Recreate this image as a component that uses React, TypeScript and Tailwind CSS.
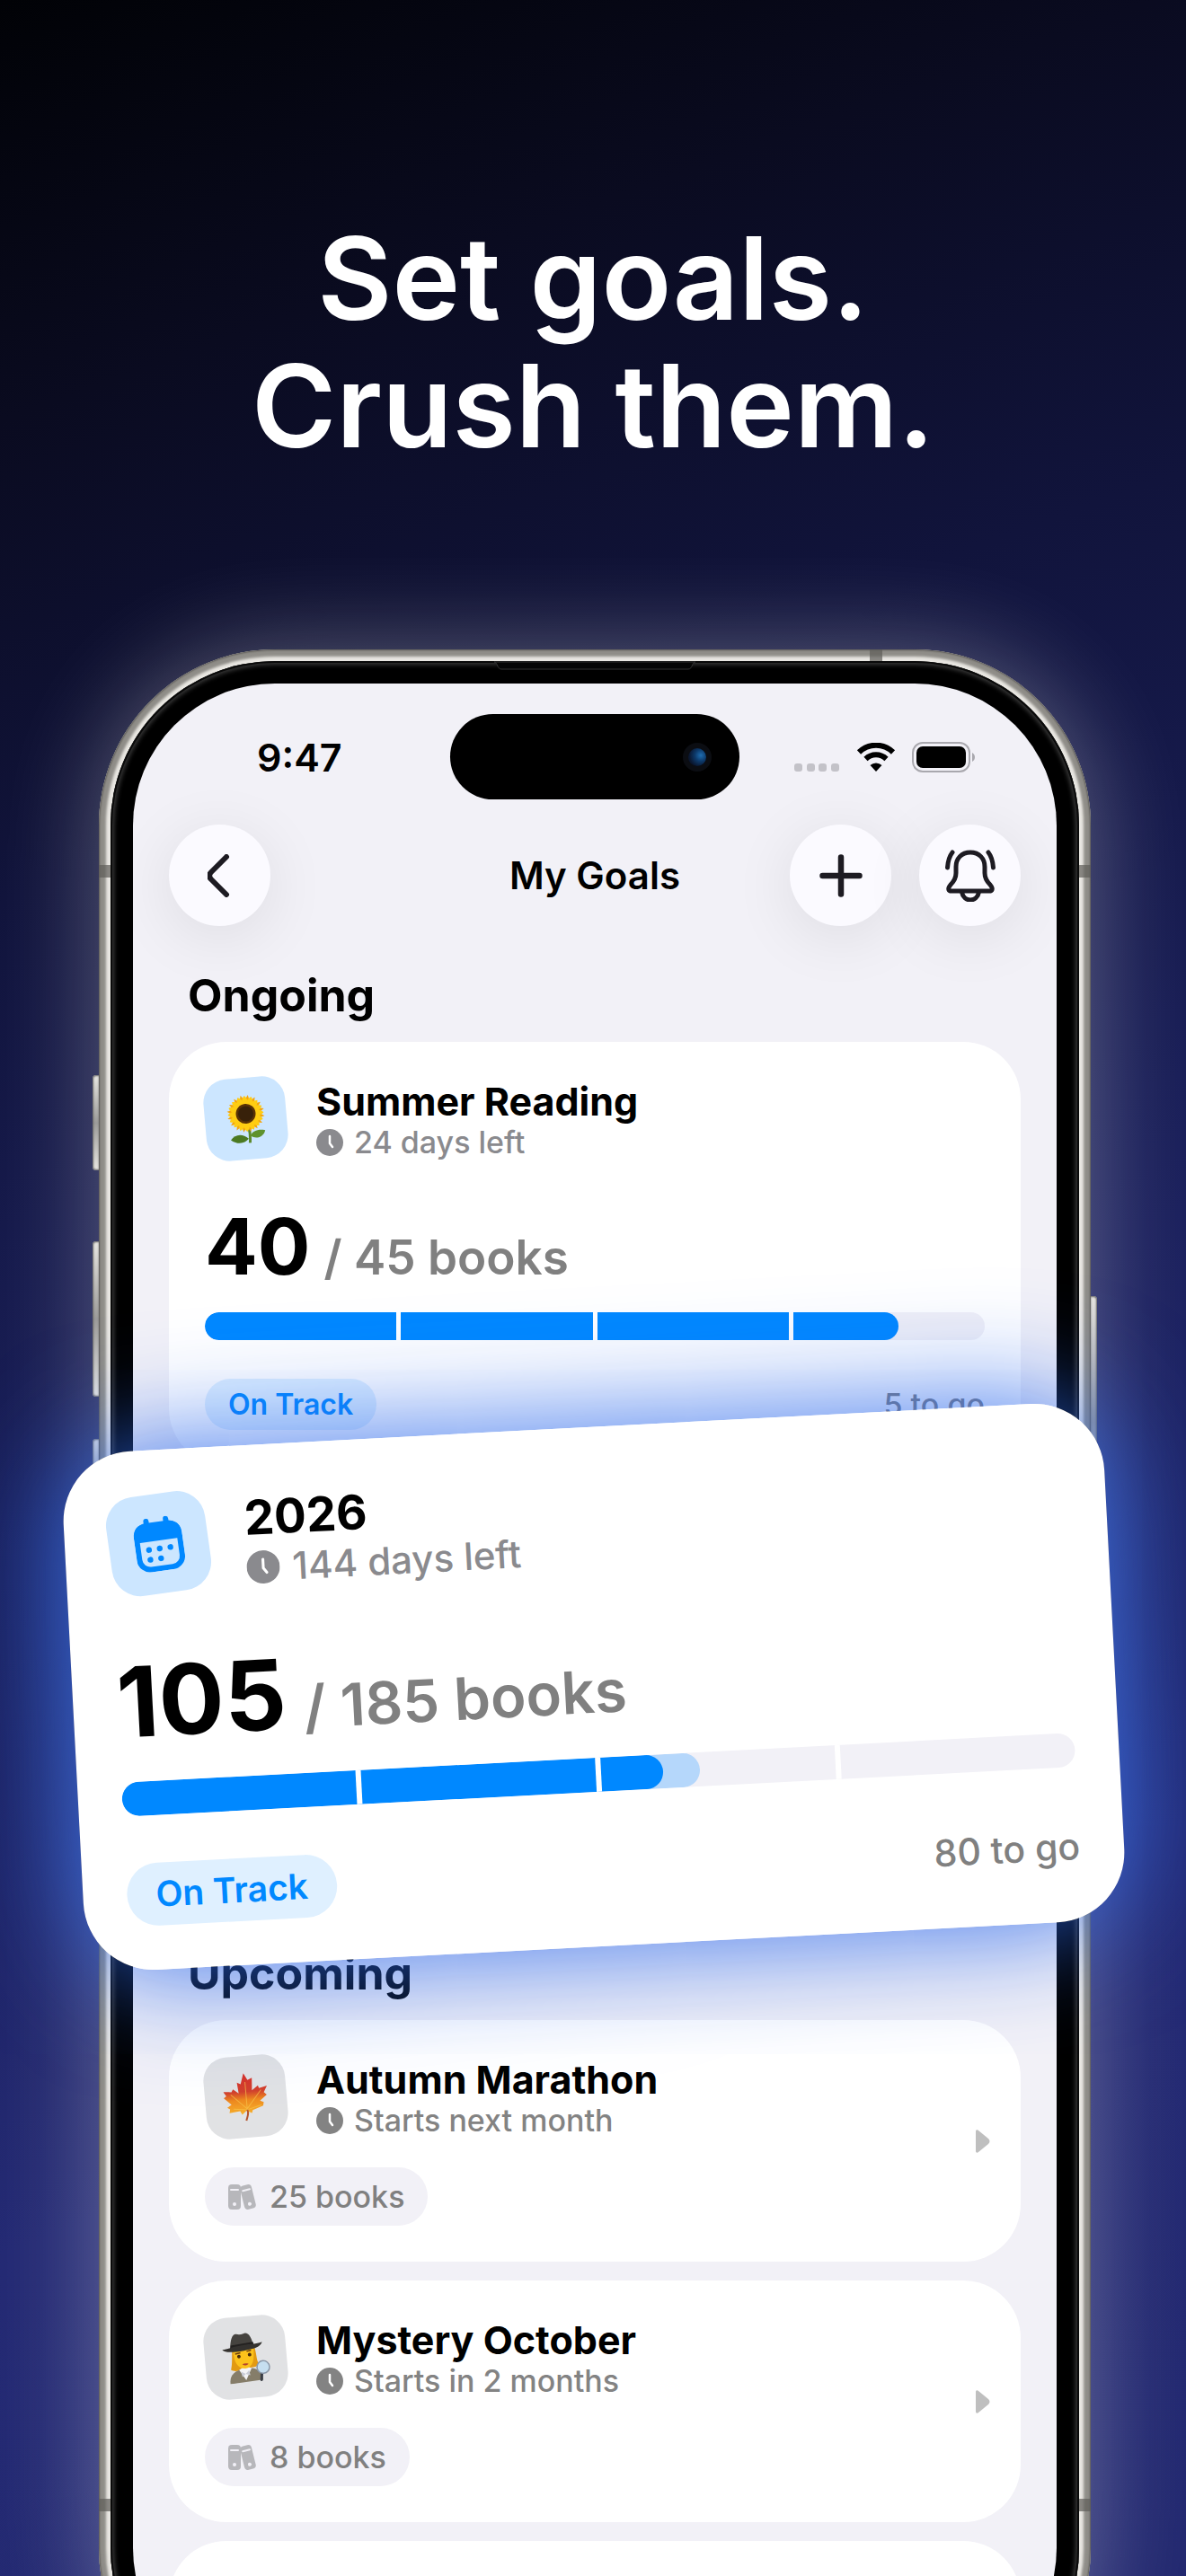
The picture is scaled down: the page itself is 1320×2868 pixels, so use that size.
import type { ReactNode } from "react";
import clsx from "clsx";

type Goal = {
  title: string;
  left: string;
  done: number;
  total: number;
  expected?: number;
  icon: ReactNode;
};

type Upcoming = {
  title: string;
  starts: string;
  books: string;
  icon: ReactNode;
};

const PETALS = Array.from({ length: 16 }, (_, i) => i * 22.5);

function Sunflower() {
  return (
    <svg viewBox="0 0 46 54" className="h-[54px] w-[46px]" aria-hidden="true">
      <path d="M25 36c1 6 1 12 0 18" stroke="#5d8a2c" strokeWidth="3" fill="none" />
      <path d="M24 49C17 42 9 43 4 49c7 6 15 5 20 0z" fill="#4b7a22" />
      <path d="M26 46c3-6 10-7 17-5-2 7-10 10-17 5z" fill="#5f922d" />
      {PETALS.map((a) => (
        <path
          key={a}
          d="M19 9 23 0l4 9z"
          fill="#f5a50c"
          transform={`rotate(${a + 11} 23 21)`}
        />
      ))}
      {PETALS.map((a) => (
        <path
          key={a}
          d="M19.500 12C19 6 21 3 23 1c2 2 4 5 3.500 11z"
          fill="#ffcd12"
          transform={`rotate(${a} 23 21)`}
        />
      ))}
      <circle cx="23" cy="21" r="11" fill="#5a3206" />
      <circle cx="23" cy="21" r="8.500" fill="#38210a" />
    </svg>
  );
}

function MapleLeaf() {
  return (
    <svg viewBox="0 0 50 54" className="h-[54px] w-[50px]" aria-hidden="true">
      <defs>
        <linearGradient id="maple" x1="0" y1="0" x2="0" y2="1">
          <stop offset="0" stopColor="#d8302a" />
          <stop offset="0.450" stopColor="#d2402c" />
          <stop offset="0.650" stopColor="#ee8a1f" />
          <stop offset="1" stopColor="#f6b02c" />
        </linearGradient>
      </defs>
      <path
        d="M24 0l4 8 5-2-1 14 7-5 1 3 9-2-4 7 3 3-8 6 4 2-1 4-12 4-1 3-6-3-5 4-2-4-12 1 1-4-3-2 5-3-8-8 3-2-3-5 9 1 2-3 6 5-1-12 4 2z"
        fill="url(#maple)"
      />
      <path
        d="M25 42V10M25 40 42 20M25 40 8 23M25 41l16-4M25 41 10 39"
        stroke="#f7c24a"
        strokeOpacity="0.700"
        fill="none"
      />
      <path d="M25 41c2 5-1 8-2 12" stroke="#b5542c" strokeWidth="2" fill="none" />
    </svg>
  );
}

function Detective() {
  return (
    <svg viewBox="0 0 52 56" className="h-[56px] w-[52px]" aria-hidden="true">
      <path d="M11 18c-1 10-1 16-3 22 4 3 9 2 12 0l14-1c3 0 5-2 5-4-2-5-1-10-3-19z" fill="#e29a12" />
      <path d="M6 56c0-9 4-13 12-15l13-1c7 1 10 5 12 14z" fill="#857d69" />
      <path d="M17 41l7 12 7-13-7-3z" fill="#f4f4f6" />
      <path d="M19 43l5 3 4-4 1 6-5-2-4 3z" fill="#c9ccd6" />
      <path d="M12 18c0 14 3 21 12 22 9-1 11-9 11-23z" fill="#fcc21b" />
      <path d="M14 23l6-1M27 21l5-1" stroke="#6d3c0e" strokeWidth="1.500" />
      <circle cx="18" cy="26" r="2" fill="#4a2b0c" />
      <circle cx="30" cy="25" r="2" fill="#4a2b0c" />
      <path d="M21 35c2-1 5-1 7 0-2 2-5 2-7 0z" fill="#b5452c" />
      <path d="M9 17C10 6 13 0 17 1c3 1 5 1 8 0 5-2 9 4 10 14z" fill="#45433f" />
      <path d="M10 13l25-2 1 5-27 2z" fill="#232120" />
      <path d="M0 17c6 0 10-2 22-3 12-1 18 0 23-2-2 6-10 7-21 8-12 1-20 1-24-3z" fill="#34322f" />
      <path d="M42 46l-1 8" stroke="#3b3f47" strokeWidth="3" strokeLinecap="round" />
      <circle cx="44" cy="40" r="7" fill="#c6dff0" stroke="#8b98a8" strokeWidth="1.500" />
    </svg>
  );
}

function CalendarIcon() {
  return (
    <svg viewBox="0 0 54 60" className="h-[60px] w-[54px]" fill="#0088ff" aria-hidden="true">
      <rect x="13" y="0" width="6" height="12" rx="3" />
      <rect x="35" y="0" width="6" height="12" rx="3" />
      <rect x="3" y="8" width="48" height="49" rx="12" fill="none" stroke="#0088ff" strokeWidth="6" />
      <path d="M1 26V18C1 10 6 6 14 6h26c8 0 13 4 13 12v8z" />
      <circle cx="15" cy="35" r="3.200" />
      <circle cx="27" cy="35" r="3.200" />
      <circle cx="39" cy="35" r="3.200" />
      <circle cx="15" cy="46" r="3.200" />
      <circle cx="27" cy="46" r="3.200" />
    </svg>
  );
}

function ClockIcon({ className }: { className: string }) {
  return (
    <svg viewBox="0 0 30 30" className={className} aria-hidden="true">
      <circle cx="15" cy="15" r="15" fill="currentColor" />
      <path
        d="M15 8v8l3 4"
        fill="none"
        stroke="#fff"
        strokeWidth="2.500"
        strokeLinecap="round"
        strokeLinejoin="round"
      />
    </svg>
  );
}

function BindersIcon() {
  return (
    <svg viewBox="0 0 31 28" className="h-[28px] w-[31px]" fill="#b7b7bb" aria-hidden="true">
      <rect x="0" y="0" width="14" height="28" rx="4" />
      <rect x="2" y="5" width="10" height="2" rx="1" fill="#f2f1f7" />
      <circle cx="7" cy="22" r="2" fill="#f2f1f7" />
      <g transform="rotate(-14 22 14)">
        <rect x="15.500" y="0.500" width="13" height="27" rx="4" />
        <rect x="17" y="5" width="10" height="2" rx="1" fill="#f2f1f7" />
        <circle cx="22" cy="22" r="2" fill="#f2f1f7" />
      </g>
    </svg>
  );
}

function StatusIcons() {
  return (
    <div className="flex items-center justify-end pr-[90px]">
      <svg viewBox="0 0 50 32" className="h-[32px] w-[50px]" fill="#c3c2c8" aria-hidden="true">
        <rect x="0" y="23" width="9" height="9" rx="3" />
        <rect x="14" y="23" width="9" height="9" rx="3" />
        <rect x="27" y="23" width="9" height="9" rx="3" />
        <rect x="41" y="23" width="9" height="9" rx="3" />
      </svg>
      <svg viewBox="0 0 44 32" className="ml-[19px] h-[32px] w-[44px]" aria-hidden="true">
        <path d="M3 10.500a27 27 0 0 1 38 0" fill="none" stroke="#000" strokeWidth="6" />
        <path d="M10.500 18a16.500 16.500 0 0 1 23 0" fill="none" stroke="#000" strokeWidth="6" />
        <path d="M15.500 25a9.500 9.500 0 0 1 13 0L22 32z" fill="#000" />
      </svg>
      <svg viewBox="0 0 71 34" className="ml-[18px] h-[34px] w-[71px]" aria-hidden="true">
        <rect x="1" y="1" width="63" height="32" rx="11" fill="none" stroke="#a9a8ae" strokeWidth="2" />
        <rect x="5" y="5" width="55" height="24" rx="7" fill="#000" />
        <path d="M67 12c4 2 4 8 0 10z" fill="#a9a8ae" />
      </svg>
    </div>
  );
}

function RoundButton({ label, children }: { label: string; children: ReactNode }) {
  return (
    <button
      type="button"
      aria-label={label}
      className="grid size-[113px] place-items-center rounded-full bg-[#fbfaff] shadow-[0_12px_70px_rgba(0,0,0,0.09)]"
    >
      {children}
    </button>
  );
}

function NavBar() {
  return (
    <nav className="mt-[28px] grid grid-cols-[1fr_auto_1fr] items-center px-[40px]">
      <RoundButton label="Back">
        <svg viewBox="0 0 28 48" className="h-[48px] w-[28px]" fill="none" stroke="#1d1b22" strokeWidth="6" strokeLinecap="round" strokeLinejoin="round" aria-hidden="true">
          <path d="M21 3 4 20q-4 4 0 8l17 17" />
        </svg>
      </RoundButton>
      <h1 className="text-[42px] leading-[50px] font-semibold">My Goals</h1>
      <div className="flex justify-end gap-[31px]">
        <RoundButton label="Add goal">
          <svg viewBox="0 0 48 48" className="size-[48px]" stroke="#1d1b22" strokeWidth="6.500" strokeLinecap="round" aria-hidden="true">
            <path d="M24 3.500v41M3.500 24h41" />
          </svg>
        </RoundButton>
        <RoundButton label="Reminders">
          <svg viewBox="0 0 56 58" className="h-[58px] w-[56px]" fill="none" stroke="#1d1b22" strokeWidth="5" strokeLinecap="round" strokeLinejoin="round" aria-hidden="true">
            <path d="M28 3c-10 0-16 7-16 16v7c0 6-2 9-6 13-4 5-2 7 1 7h42c3 0 5-2 1-7-4-4-6-7-6-13v-7C44 10 38 3 28 3z" />
            <path d="M18.500 47c1 6 5 9 9.500 9s8.500-3 9.500-9" />
            <path d="M8 3C4 8 3 13 2.500 20M48 3c4 5 5 10 5.500 17" />
          </svg>
        </RoundButton>
      </div>
    </nav>
  );
}

function ProgressBar({ goal, large }: { goal: Goal; large?: boolean }) {
  const pct = (goal.done / goal.total) * 100;
  return (
    <div
      role="progressbar"
      aria-label={goal.title}
      aria-valuenow={goal.done}
      aria-valuemax={goal.total}
      className={clsx(
        "relative overflow-hidden rounded-full bg-[#f2f1f7]",
        large ? "mt-[35px] h-[38px]" : "mt-[29px] h-[31px]"
      )}
    >
      {goal.expected && (
        <div
          className="absolute inset-y-0 left-0 rounded-full bg-[#b5d7fb]"
          style={{ width: `${goal.expected}%` }}
        />
      )}
      <div
        className="absolute inset-y-0 left-0 rounded-full bg-[#0088ff]"
        style={{ width: `${pct}%` }}
      />
      {/* quarter marks */}
      <div className="absolute inset-0 flex justify-evenly">
        <span className={clsx("bg-white", large ? "w-[6px]" : "w-[5px]")} />
        <span className={clsx("bg-white", large ? "w-[6px]" : "w-[5px]")} />
        <span className={clsx("bg-white", large ? "w-[6px]" : "w-[5px]")} />
      </div>
    </div>
  );
}

function GoalCard({ goal, large }: { goal: Goal; large?: boolean }) {
  return (
    <article
      className={clsx(
        "bg-white",
        large ? "rounded-[78px] p-[49px]" : "rounded-[64px] p-[40px]"
      )}
    >
      <div className={clsx("flex items-center", large ? "gap-[41px]" : "gap-[33px]")}>
        <div
          className={clsx(
            "grid shrink-0 -rotate-5 place-items-center bg-[#cce6ff]",
            large ? "size-[111px] rounded-[32px]" : "size-[91px] rounded-[26px]"
          )}
        >
          {goal.icon}
        </div>
        <div>
          <h3
            className={clsx(
              "font-bold",
              large ? "text-[53px] leading-[64px]" : "text-[43px] leading-[52px]"
            )}
          >
            {goal.title}
          </h3>
          <p
            className={clsx(
              "flex items-center font-medium text-[#8a8a8e]",
              large
                ? "gap-[14px] text-[42px] leading-[47px]"
                : "gap-[12px] text-[34px] leading-[39px]"
            )}
          >
            <ClockIcon className={large ? "size-[37px]" : "size-[30px]"} />
            {goal.left}
          </p>
        </div>
      </div>

      <p
        className={clsx(
          "flex items-baseline font-bold",
          large
            ? "mt-[65px] gap-[19px] text-[108px] leading-[108px]"
            : "mt-[53px] gap-[15px] text-[87px] leading-[88px]"
        )}
      >
        {goal.done}
        <span
          className={clsx(
            "font-semibold text-[#808080]",
            large ? "text-[65px] leading-[66px]" : "text-[53px] leading-[54px]"
          )}
        >
          / {goal.total} books
        </span>
      </p>

      <ProgressBar goal={goal} large={large} />

      <div
        className={clsx(
          "flex items-center justify-between",
          large ? "mt-[53px]" : "mt-[43px]"
        )}
      >
        <span
          className={clsx(
            "rounded-full bg-[#dff0ff] font-semibold text-[#0088ff]",
            large
              ? "px-[32px] text-[39px] leading-[70px]"
              : "px-[26px] text-[32px] leading-[57px]"
          )}
        >
          On Track
        </span>
        <span
          className={clsx(
            "font-medium text-[#808080]",
            large ? "text-[41px] leading-[70px]" : "text-[34px] leading-[57px]"
          )}
        >
          {goal.total - goal.done} to go
        </span>
      </div>
    </article>
  );
}

function UpcomingCard({ item }: { item: Upcoming }) {
  return (
    <a
      href="#"
      className="flex items-center justify-between rounded-[64px] bg-white py-[40px] pr-[34px] pl-[40px]"
    >
      <div>
        <div className="flex items-center gap-[33px]">
          <div className="grid size-[91px] shrink-0 -rotate-5 place-items-center rounded-[26px] bg-[#e1e2e4]">
            {item.icon}
          </div>
          <div>
            <h3 className="text-[43px] leading-[52px] font-bold">{item.title}</h3>
            <p className="flex items-center gap-[12px] text-[34px] leading-[39px] font-medium text-[#838383]">
              <ClockIcon className="size-[30px]" />
              {item.starts}
            </p>
          </div>
        </div>
        <span className="mt-[33px] inline-flex items-center gap-[15px] rounded-full bg-[#f2f1f7] px-[26px] align-top text-[34px] leading-[65px] font-medium text-[#808080]">
          <BindersIcon />
          {item.books}
        </span>
      </div>
      <svg viewBox="0 0 16 26" className="h-[26px] w-[16px]" fill="#bfbfbf" aria-hidden="true">
        <path d="M0 2c0-2 2-2 3-1l11 9c2 2 2 4 0 6L3 25c-1 1-3 1-3-1z" />
      </svg>
    </a>
  );
}

const summer: Goal = {
  title: "Summer Reading",
  left: "24 days left",
  done: 40,
  total: 45,
  icon: <Sunflower />,
};

const year: Goal = {
  title: "2026",
  left: "144 days left",
  done: 105,
  total: 185,
  expected: 60.6,
  icon: <CalendarIcon />,
};

const upcoming: Upcoming[] = [
  { title: "Autumn Marathon", starts: "Starts next month", books: "25 books", icon: <MapleLeaf /> },
  { title: "Mystery October", starts: "Starts in 2 months", books: "8 books", icon: <Detective /> },
];

const SIDE_KEY =
  "absolute w-[8px] bg-linear-to-b from-[#e4e2dd] via-[#8b8a88] to-[#e4e2dd] shadow-[inset_0_0_2px_1px_#4b4a49]";
const BAND = "absolute bg-[#5e5d59]/70";

function Phone({ children }: { children: ReactNode }) {
  return (
    <div className="relative aspect-[1104/2310] shrink-0">
      {/* hardware keys */}
      <span className={clsx(SIDE_KEY, "top-[474px] -left-[7px] h-[106px] rounded-l-[4px]")} />
      <span className={clsx(SIDE_KEY, "top-[659px] -left-[7px] h-[173px] rounded-l-[4px]")} />
      <span className={clsx(SIDE_KEY, "top-[879px] -left-[7px] h-[173px] rounded-l-[4px]")} />
      <span className={clsx(SIDE_KEY, "top-[720px] -right-[7px] h-[280px] rounded-r-[4px]")} />

      <div className="relative h-full rounded-[196px] bg-[#e9e7e2] p-[13px] shadow-[0_0_110px_rgba(255,255,255,0.32),inset_0_0_2px_1px_#5b5955,inset_0_0_3px_8px_#8f8d88]">
        <span className={clsx(BAND, "top-[240px] left-0 h-[14px] w-[13px]")} />
        <span className={clsx(BAND, "top-[240px] right-0 h-[14px] w-[13px]")} />
        <span className={clsx(BAND, "top-[2059px] left-0 h-[14px] w-[13px]")} />
        <span className={clsx(BAND, "top-[2059px] right-0 h-[14px] w-[13px]")} />
        <span className={clsx(BAND, "top-0 right-[232px] h-[13px] w-[14px]")} />
        <div className="relative h-full rounded-[183px] bg-black p-[25px] shadow-[inset_0_0_0_2px_#0a0a0a,inset_0_0_5px_4px_#3a3a3a]">
          {/* earpiece slot */}
          <svg viewBox="0 0 224 10" className="absolute top-0 left-1/2 h-[10px] w-[224px] -translate-x-1/2" aria-hidden="true">
            <path d="M0 1c4 0 3 8 8 8h208c5 0 4-8 8-8z" fill="#050505" stroke="#333" />
          </svg>
          <div className="h-full overflow-hidden rounded-[158px] bg-[#f2f1f7]">{children}</div>
        </div>
      </div>
    </div>
  );
}

export default function App() {
  return (
    <main className="relative flex h-screen flex-col overflow-hidden bg-[linear-gradient(160deg,#010206_0%,#0a0b20_14%,#11143c_30%,#1a1f58_50%,#242a74_75%,#232970_100%)] font-[Inter,'Liberation_Sans',sans-serif] text-black">
      <h2 className="pt-[239px] pb-[200px] text-center text-[128px] leading-[142px] font-semibold text-white">
        Set goals.
        <br />
        Crush them.
      </h2>

      <div className="pr-[106px] pl-[110px]">
        <Phone>
          <div className="grid grid-cols-[1fr_322px_1fr] items-center pt-[34px]">
            <time className="pl-[138px] text-[43px] leading-[50px] font-semibold">9:47</time>
            <div className="flex h-[95px] items-center justify-end rounded-full bg-black pr-[31px]">
              <span className="size-[32px] rounded-full border-[6px] border-[#0b0d12] bg-[radial-gradient(circle_at_70%_40%,#1f6db0_0%,#0d3a6b_35%,#0a1730_70%)]" />
            </div>
            <StatusIcons />
          </div>
          <NavBar />

          <section className="px-[40px]">
            <h2 className="mt-[47px] mb-[22px] ml-[21px] text-[50px] leading-[60px] font-bold">
              Ongoing
            </h2>
            <GoalCard goal={summer} />
            {/* slot of the lifted card */}
            <div className="mt-[21px] h-[472px] rounded-[64px] bg-white" />
          </section>

          <section className="px-[40px]">
            <h2 className="mt-[42px] mb-[22px] ml-[21px] text-[50px] leading-[60px] font-bold">
              Upcoming
            </h2>
            <div className="flex flex-col gap-[21px]">
              {upcoming.map((u) => (
                <UpcomingCard key={u.title} item={u} />
              ))}
              <div className="h-[270px] rounded-[64px] bg-white" />
            </div>
          </section>
        </Phone>
      </div>

      {/* lifted goal */}
      <div className="absolute top-[1589px] right-[79px] left-[81px] -rotate-3 rounded-[78px] shadow-[0_0_130px_rgba(45,105,235,0.95)]">
        <GoalCard goal={year} large />
      </div>
    </main>
  );
}
